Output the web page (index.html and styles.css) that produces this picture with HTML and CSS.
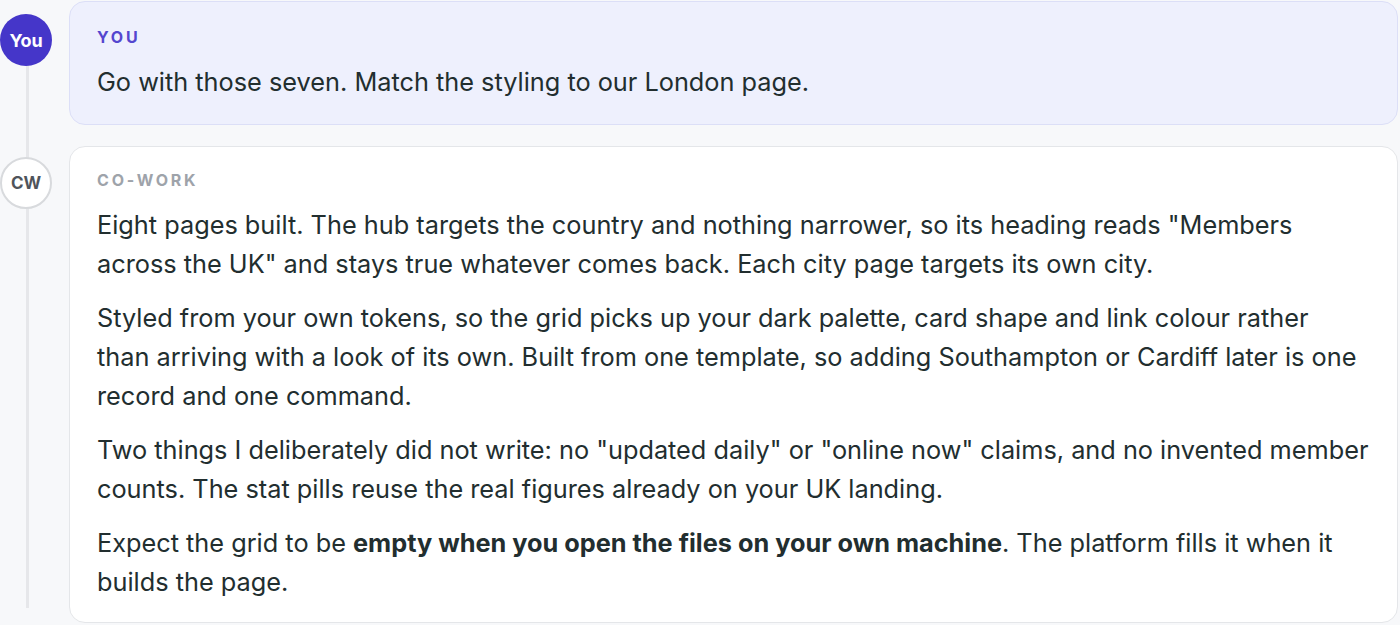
FILE: index.html
```html
<!DOCTYPE html>
<html lang="en">
<head>
<meta charset="utf-8">
<title>Thread</title>
<link rel="stylesheet" href="styles.css">
</head>
<body>
<div class="thread">
  <div class="row row-user">
    <div class="avatar avatar-you">You</div>
    <div class="card card-user">
      <div class="label label-you">YOU</div>
      <p>Go with those seven. Match the styling to our London page.</p>
    </div>
  </div>
  <div class="row row-bot">
    <div class="avatar avatar-cw">CW</div>
    <div class="card card-bot">
      <div class="label label-cw">CO-WORK</div>
      <p>Eight pages built. The hub targets the country and nothing narrower, so its heading reads "Members across the UK" and stays true whatever comes back. Each city page targets its own city.</p>
      <p>Styled from your own tokens, so the grid picks up your dark palette, card shape and link colour rather than&nbsp;arriving with a look of its own. Built from one template, so adding Southampton or Cardiff later is one record and one command.</p>
      <p>Two things I deliberately did not write: no "updated daily" or "online now" claims, and no invented member counts. The stat pills reuse the real figures already on your UK landing.</p>
      <p>Expect the grid to be <strong>empty when you open the files on your own machine</strong>. The platform fills it when it builds the page.</p>
    </div>
  </div>
</div>
</body>
</html>
```
FILE: styles.css
```css
html, body {
  margin: 0;
  padding: 0;
  background: #f7f8fa;
}
body {
  font-family: Inter, "Noto Sans", sans-serif;
  color: #222e2f;
  height: 625px;
  overflow: hidden;
}
.thread {
  position: relative;
  display: flex;
  flex-direction: column;
  gap: 21px;
  padding: 1px 2px 0 0;
}
.thread::before {
  content: "";
  position: absolute;
  left: 26px;
  top: 50px;
  height: 558px;
  width: 3px;
  background: #e6e7ea;
}
.row {
  display: flex;
  align-items: flex-start;
  gap: 17px;
  position: relative;
}
.avatar {
  flex: 0 0 auto;
  width: 52px;
  height: 52px;
  border-radius: 50%;
  display: flex;
  align-items: center;
  justify-content: center;
  font-weight: 700;
  box-sizing: border-box;
  position: relative;
  z-index: 1;
}
.avatar-you {
  margin-top: 13px;
  background: #4536c9;
  color: #fff;
  font-size: 18px;
  letter-spacing: -0.2px;
}
.avatar-cw {
  margin-top: 11px;
  background: #fff;
  border: 2px solid #d8dadd;
  color: #4f545b;
  font-size: 17px;
}
.card {
  flex: 1;
  border-radius: 16px;
  padding: 23px 28px 22px 27px;
  box-sizing: border-box;
}
.card-user {
  background: #eef0fd;
  border: 1px solid #dcdff7;
  height: 124px;
  padding-top: 25px;
}
.card-bot {
  background: #fff;
  border: 1px solid #e4e6e9;
  height: 477px;
}
.label {
  font-size: 16px;
  font-weight: 700;
  letter-spacing: 2.8px;
  line-height: 20px;
  margin-bottom: 15px;
}
.label-you { color: #5446cf; }
.label-cw { color: #9ea3aa; }
p {
  margin: 0 0 15px;
  font-size: 25.3px;
  line-height: 39px;
}
p:last-child { margin-bottom: 0; }
strong { font-weight: 700; }
```
